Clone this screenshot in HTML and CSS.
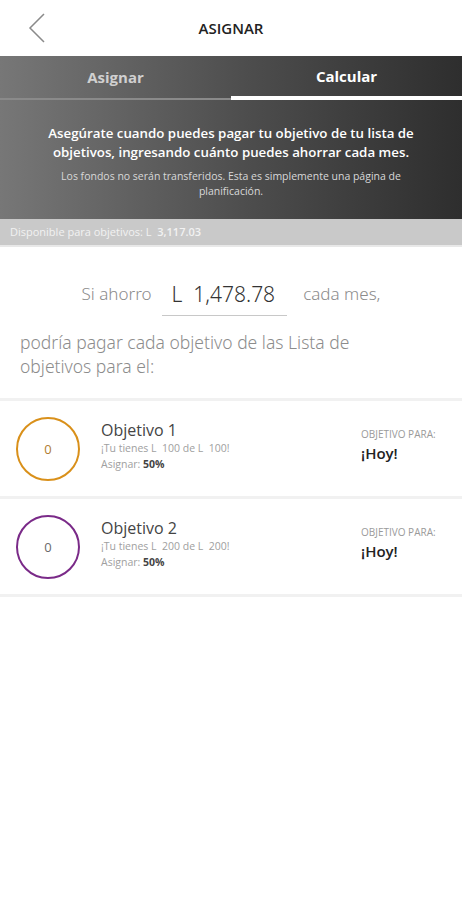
FILE: index.html
```html
<!DOCTYPE html>
<html lang="es">
<head>
    <meta charset="UTF-8">
    <meta name="viewport" content="width=device-width, initial-scale=1.0">
    <title>Asignar</title>
    <link rel="stylesheet" href="styles.css">
</head>
<body>

<header class="topbar">
    <a class="back" href="#">
        <svg width="20" height="32" viewBox="0 0 20 32"><polyline points="16,2 2,16 16,30" fill="none" stroke="#8a8a8a" stroke-width="1.5"/></svg>
    </a>
    <h1>ASIGNAR</h1>
</header>

<div class="dark">
    <nav class="tabs">
        <a href="#" class="tab">Asignar</a>
        <a href="#" class="tab active">Calcular</a>
    </nav>
    <div class="intro">
        <p class="lead">Asegúrate cuando puedes pagar tu objetivo de tu lista de objetivos, ingresando cuánto puedes ahorrar cada mes.</p>
        <p class="note">Los fondos no serán transferidos. Esta es simplemente una página de planificación.</p>
    </div>
</div>

<div class="available">Disponible para objetivos: L &nbsp;<b>3,117.03</b></div>

<section class="calc">
    <div class="save-row">
        <span class="muted">Si ahorro</span>
        <span class="amount">L &nbsp;1,478.78</span>
        <span class="muted">cada mes,</span>
    </div>
    <p class="result">podría pagar cada objetivo de las Lista de objetivos para el:</p>
</section>

<ul class="goals">
    <li class="goal">
        <div class="ring orange">0</div>
        <div class="info">
            <div class="name">Objetivo 1</div>
            <div class="small">¡Tu tienes L &nbsp;100 de L &nbsp;100!</div>
            <div class="small">Asignar: <b>50%</b></div>
        </div>
        <div class="when">
            <div class="label">OBJETIVO PARA:</div>
            <div class="day">¡Hoy!</div>
        </div>
    </li>
    <li class="goal">
        <div class="ring purple">0</div>
        <div class="info">
            <div class="name">Objetivo 2</div>
            <div class="small">¡Tu tienes L &nbsp;200 de L &nbsp;200!</div>
            <div class="small">Asignar: <b>50%</b></div>
        </div>
        <div class="when">
            <div class="label">OBJETIVO PARA:</div>
            <div class="day">¡Hoy!</div>
        </div>
    </li>
</ul>

</body>
</html>
```

FILE: styles.css
```css
body {
    font-family: "Open Sans", sans-serif;
    background-color: #ffffff;
    color: #333333;
    margin: 0;
    padding: 0;
}
.topbar {
    height: 56px;
    display: flex;
    align-items: center;
    justify-content: center;
    position: relative;
    background: #ffffff;
}
.topbar h1 {
    margin: 0;
    font-size: 15px;
    font-weight: 600;
    color: #222222;
}
.back {
    position: absolute;
    left: 28px;
    top: 12px;
}
.dark {
    background: linear-gradient(to right, #777777, #4c4c4c 55%, #2e2e2e);
    color: #ffffff;
}
.tabs {
    display: flex;
    height: 44px;
}
.tab {
    flex: 1;
    text-align: center;
    color: #d0d0d0;
    text-decoration: none;
    font-size: 15px;
    font-weight: 700;
    line-height: 42px;
    border-bottom: 2px solid #8a8a8a;
}
.tab.active {
    color: #ffffff;
    border-bottom: 4px solid #ffffff;
    line-height: 40px;
}
.intro {
    padding: 24px 20px 14px;
    text-align: center;
    height: 81px;
}
.lead {
    margin: 0 0 7px;
    font-size: 13.3px;
    font-weight: 600;
    line-height: 19px;
}
.note {
    margin: 0;
    padding: 0 24px;
    font-size: 10.5px;
    line-height: 15px;
    color: #d8d8d8;
}
.available {
    background: #c9c9c9;
    color: #f2f2f2;
    font-size: 11px;
    height: 26px;
    line-height: 26px;
    padding-left: 10px;
    border-bottom: 2px solid #e8e8e8;
}
.available b {
    font-weight: 600;
}
.calc {
    padding: 28px 20px 20px;
    border-bottom: 3px solid #f1f1f1;
}
.save-row {
    display: flex;
    justify-content: center;
    align-items: center;
    gap: 10px;
    font-family: "Noto Sans", sans-serif;
    font-weight: 300;
}
.muted {
    color: #8c8c8c;
    font-size: 17px;
}
.amount {
    font-size: 21px;
    color: #333333;
    padding: 0 12px 7px 10px;
    border-bottom: 1px solid #c8c8c8;
    margin: 0 6px 0 0;
    position: relative;
    top: 5px;
}
.result {
    margin: 19px 0 0;
    max-width: 370px;
    font-family: "Noto Sans", sans-serif;
    font-weight: 300;
    font-size: 17.5px;
    line-height: 24px;
    color: #8c8c8c;
}
.goals {
    list-style: none;
    margin: 0;
    padding: 0;
}
.goal {
    display: flex;
    align-items: center;
    height: 95px;
    padding: 0 16px;
    border-bottom: 3px solid #f1f1f1;
}
.ring {
    width: 60px;
    height: 60px;
    border-radius: 50%;
    border: 2px solid;
    display: flex;
    align-items: center;
    justify-content: center;
    font-size: 13px;
    color: #777777;
    flex-shrink: 0;
}
.ring.orange {
    border-color: #d9901a;
    color: #b07d30;
}
.ring.purple {
    border-color: #7a2a88;
    color: #6a6a6a;
}
.info {
    flex: 1;
    margin-left: 21px;
    margin-top: -6px;
}
.name {
    font-size: 16px;
    color: #444444;
    line-height: 20px;
}
.small {
    font-size: 10.5px;
    color: #a0a0a0;
    line-height: 16px;
}
.small b {
    color: #444444;
    font-weight: 700;
}
.when {
    width: 85px;
    margin-top: -6px;
}
.label {
    font-size: 10px;
    color: #9a9a9a;
    line-height: 14px;
}
.day {
    font-size: 15px;
    font-weight: 600;
    color: #222222;
    line-height: 24px;
}
```
